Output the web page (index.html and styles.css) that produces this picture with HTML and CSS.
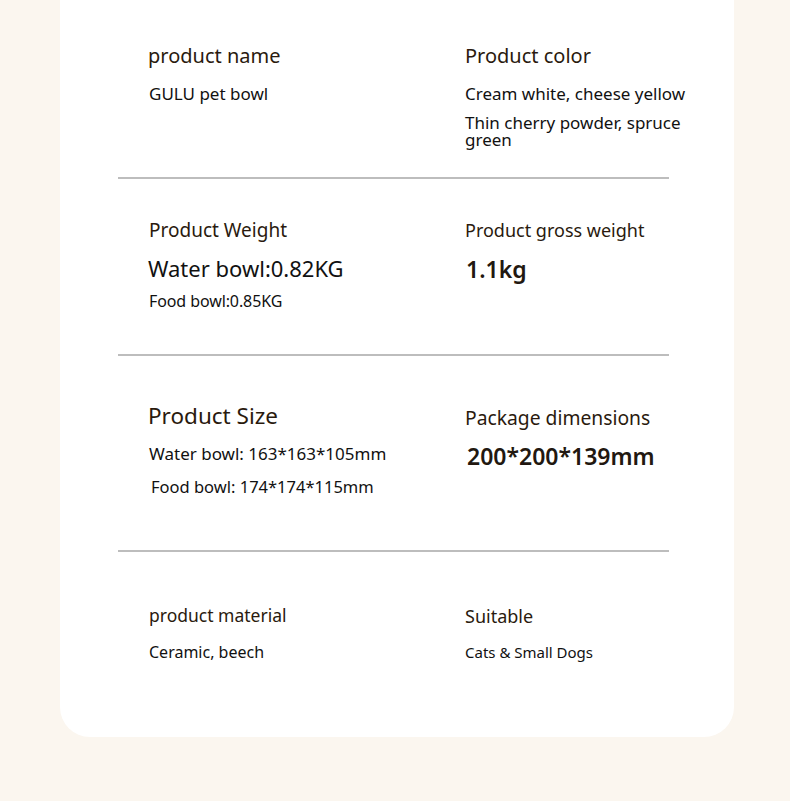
FILE: index.html
```html
<!DOCTYPE html>
<html lang="en">
<head>
<meta charset="utf-8">
<title>GULU pet bowl specs</title>
<link rel="stylesheet" href="styles.css">
</head>
<body>
<div class="card">
  <section class="spec s1">
    <div class="col">
      <h2 class="head h-name">product name</h2>
      <p class="val v-name">GULU pet bowl</p>
    </div>
    <div class="col">
      <h2 class="head h-color">Product color</h2>
      <p class="val v-color1">Cream white, cheese yellow</p>
      <p class="val v-color2">Thin cherry powder, spruce green</p>
    </div>
  </section>
  <hr class="rule">
  <section class="spec s2">
    <div class="col">
      <h2 class="head h-weight">Product Weight</h2>
      <p class="val v-water">Water bowl:0.82KG</p>
      <p class="val v-food">Food bowl:0.85KG</p>
    </div>
    <div class="col">
      <h2 class="head h-gross">Product gross weight</h2>
      <p class="val big v-gross">1.1kg</p>
    </div>
  </section>
  <hr class="rule">
  <section class="spec s3">
    <div class="col">
      <h2 class="head h-size">Product Size</h2>
      <p class="val v-wsize">Water bowl: 163*163*105mm</p>
      <p class="val v-fsize">Food bowl: 174*174*115mm</p>
    </div>
    <div class="col">
      <h2 class="head h-pack">Package dimensions</h2>
      <p class="val big v-pack">200*200*139mm</p>
    </div>
  </section>
  <hr class="rule">
  <section class="spec s4">
    <div class="col">
      <h2 class="head h-mat">product material</h2>
      <p class="val v-mat">Ceramic, beech</p>
    </div>
    <div class="col">
      <h2 class="head h-suit">Suitable</h2>
      <p class="val v-suit">Cats &amp; Small Dogs</p>
    </div>
  </section>
</div>
</body>
</html>
```
FILE: styles.css
```css
html, body {
  margin: 0;
  padding: 0;
}
body {
  background: #fbf6ef;
  font-family: "Noto Sans", "Open Sans", sans-serif;
  width: 790px;
  height: 801px;
  overflow: hidden;
}
.card {
  margin-left: 60px;
  width: 674px;
  height: 737px;
  background: #ffffff;
  border-radius: 0 0 30px 30px;
}
.spec {
  display: grid;
  grid-template-columns: 317px 1fr;
  padding-left: 88px;
  box-sizing: border-box;
}
.col {
  display: flex;
  flex-direction: column;
  align-items: flex-start;
}
.head {
  margin: 0;
  font-weight: 400;
  color: #2a1a0e;
  white-space: nowrap;
}
.val {
  margin: 0;
  color: #111111;
  white-space: nowrap;
}
.big {
  font-weight: 600;
  font-size: 23px;
  line-height: 30px;
  color: #221810;
}
.rule {
  border: 0;
  height: 2px;
  background: #bdbdbd;
  margin: 0 65px 0 58px;
}

/* section 1 */
.s1 { height: 177px; padding-top: 44px; }
.h-name, .h-color { font-size: 20px; line-height: 24px; }
.v-name { font-size: 17px; line-height: 20px; margin-top: 16px; margin-left: 1px; }
.v-color1 { font-size: 17px; line-height: 20px; margin-top: 16px; }
.v-color2 { font-size: 17px; line-height: 17px; margin-top: 10px; white-space: normal; width: 240px; }

/* section 2 */
.s2 { height: 175px; padding-top: 39px; }
.h-weight { font-size: 19px; line-height: 24px; margin-left: 1px; }
.h-gross { font-size: 18px; line-height: 24px; }
.v-water { font-size: 22px; line-height: 28px; margin-top: 12px; }
.v-food { font-size: 16px; line-height: 20px; margin-top: 9px; margin-left: 1px; letter-spacing: -0.1px; }
.v-gross { margin-top: 12px; margin-left: 1px; }

/* section 3 */
.s3 { height: 194px; padding-top: 46px; }
.h-size { font-size: 22.5px; line-height: 28px; }
.h-pack { font-size: 19.3px; line-height: 26px; margin-top: 3px; }
.v-wsize { font-size: 17px; line-height: 24px; margin-top: 12px; margin-left: 1px; }
.v-fsize { font-size: 16.5px; line-height: 22px; margin-top: 10px; margin-left: 3px; }
.v-pack { margin-top: 10px; margin-left: 2px; }

/* section 4 */
.s4 { height: 185px; padding-top: 51px; }
.h-mat { font-size: 17.5px; line-height: 24px; margin-left: 1px; }
.h-suit { font-size: 18px; line-height: 24px; margin-top: 1px; }
.v-mat { font-size: 16px; line-height: 22px; margin-top: 14px; margin-left: 1px; }
.v-suit { font-size: 15px; line-height: 20px; margin-top: 14px; }
```
